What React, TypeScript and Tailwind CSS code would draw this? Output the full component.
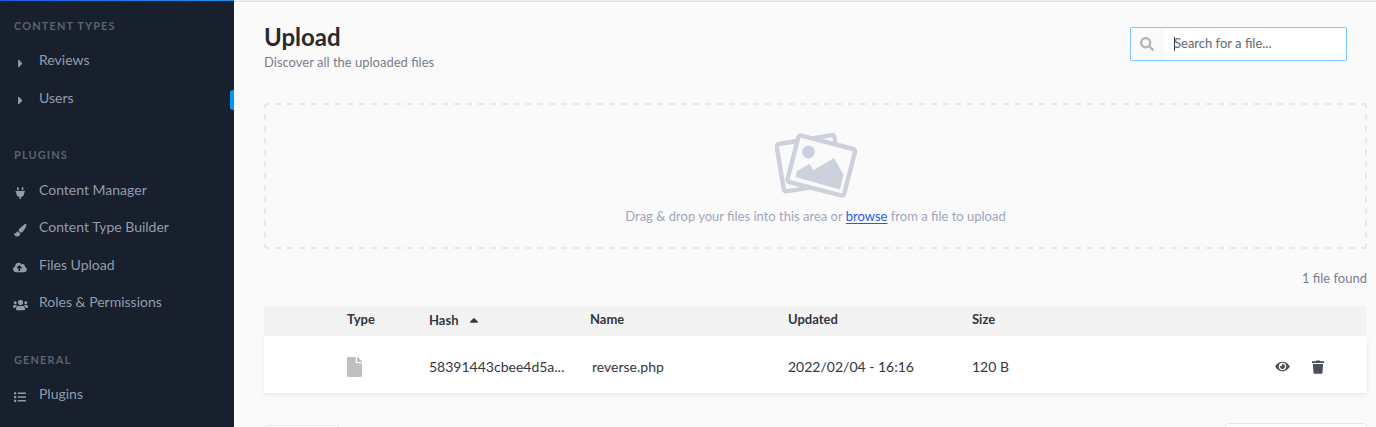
import type { ReactNode } from 'react';
import {
  FaCaretRight, FaCaretUp, FaCloudUploadAlt, FaEye, FaFile, FaList,
  FaPaintBrush, FaPlug, FaSearch, FaUsers,
} from 'react-icons/fa';

function SectionTitle({ children }: { children: ReactNode }) {
  return (
    <h3 className="pl-[14px] text-[11px] leading-[16px] font-bold tracking-[1.1px] text-[#5b626f] uppercase">
      {children}
    </h3>
  );
}

function NavLink({ icon, label }: { icon: ReactNode; label: string }) {
  return (
    <li className="flex h-[37.5px] items-center pl-[13px]">
      <span className="flex w-[26px] pt-[5px]">{icon}</span>
      <span className="text-[14px] leading-[20px]">{label}</span>
    </li>
  );
}

function Sidebar() {
  return (
    <aside className="relative h-full w-[234px] shrink-0 bg-[#18202e] text-[#919bae]">
      <div className="mb-[17px] h-px bg-linear-to-r from-[#1c5de7] to-[#1c91e7]" />
      <SectionTitle>Content types</SectionTitle>
      <ul className="mt-[7.5px]">
        <NavLink icon={<FaCaretRight className="mt-[2px] ml-px size-[13px]" />} label="Reviews" />
        <NavLink icon={<FaCaretRight className="mt-px ml-px size-[13px]" />} label="Users" />
      </ul>
      <div className="mt-[30.5px]">
        <SectionTitle>Plugins</SectionTitle>
      </div>
      <ul className="mt-[8px]">
        <NavLink icon={<FaPlug className="mt-px ml-[1px] size-[12.5px]" />} label="Content Manager" />
        <NavLink icon={<FaPaintBrush className="mt-px ml-[1px] size-[12.5px]" />} label="Content Type Builder" />
        <NavLink icon={<FaCloudUploadAlt className="h-[11px] w-[14px]" />} label="Files Upload" />
        <NavLink icon={<FaUsers className="mt-px h-[12px] w-[15px]" />} label="Roles & Permissions" />
      </ul>
      <div className="mt-[31px]">
        <SectionTitle>General</SectionTitle>
      </div>
      <ul className="mt-[7px]">
        <NavLink icon={<FaList className="mt-px ml-[1px] size-[12px]" />} label="Plugins" />
      </ul>
      <span className="absolute top-[90px] right-0 h-[20px] w-[4px] rounded-l-[3px] bg-[#0097f7]" />
    </aside>
  );
}

function PicturesIcon() {
  return (
    <svg className="ml-[2px] h-[66px] w-[84px]" viewBox="0 0 84 66" fill="none">
      <rect x="4.9" y="6.4" width="58.5" height="48" rx="2.5" transform="rotate(-9.5 33.4 30.4)" stroke="#cdd1dd" strokeWidth="4.4" />
      <rect x="17" y="8.6" width="58.500" height="48" rx="2.5" transform="rotate(14.5 46.500 32.6)" fill="#fafafb" stroke="#cdd1dd" strokeWidth="4.4" />
      <circle cx="33.5" cy="19" r="6.4" fill="#cdd1dd" />
      <path d="M20.500 44 22 38 34.500 31 38.500 37.3 59 25 68.500 41.500 65 56.500Z" fill="#cdd1dd" />
    </svg>
  );
}

function TrashIcon() {
  return (
    <svg className="ml-[22px] h-[14px] w-[12px]" viewBox="0 0 12 14" fill="currentColor">
      <path d="M0 1.300h3.500L4.300.4h3.400l.8.900H12V3H0ZM.9 3.900h10.200l-.6 9.100q-.1.800-.9.800H2.400q-.8 0-.9-.8Z" />
    </svg>
  );
}

function FileTable() {
  const cols = 'grid grid-cols-[83px_82px_161px_198px_184px_303px_1fr]';
  return (
    <div className="mt-[18px] h-[87px] text-[#333740]">
      <div className={`${cols} h-[30px] bg-[#f3f3f3] text-[13px] leading-[27px] font-bold`}>
        <span />
        <span>Type</span>
        <span className="flex h-[28px] items-center">Hash<FaCaretUp className="ml-[8px] size-[14px]" /></span>
        <span>Name</span>
        <span>Updated</span>
        <span>Size</span>
      </div>
      <div className={`${cols} h-[57px] items-center bg-white pt-[4px] text-[14px] shadow-[0_2px_4px_#e3e9f3]`}>
        <span />
        <FaFile className="h-[20px] w-[15px] text-[#bdbfc2]" />
        <span>58391443cbee4d5a...</span>
        <span className="pl-[2px]">reverse.php</span>
        <span>2022/02/04 - 16:16</span>
        <span>120 B</span>
        <span className="flex items-center text-[#4b515a]">
          <FaEye className="h-[13px] w-[15px]" />
          <TrashIcon />
        </span>
      </div>
    </div>
  );
}

export default function App() {
  return (
    <div className="flex h-[427px] overflow-hidden bg-[#fafafb] font-['Lato',sans-serif]">
      <Sidebar />
      <main className="flex-1 border-t border-[#eeeeef] pr-[9px] pl-[30px] shadow-[inset_0_1px_0_#e1e3e3]">
        <header className="flex h-[102px] justify-between">
          <div className="pt-[20px]">
            <h1 className="text-[24px] leading-[32px] font-bold text-[#292b2c]">Upload</h1>
            <p className="text-[13px] leading-[18px] text-[#787e8f]">Discover all the uploaded files</p>
          </div>
          <div className="mt-[26px] mr-[20px] flex h-[34px] w-[217px] overflow-hidden rounded-[2px] border border-[#78caff] bg-white">
            <span className="flex w-[33px] items-center bg-[#fafafb] pl-[8.5px]">
              <FaSearch className="size-[14px] text-[#b3b5b9]" />
            </span>
            <span className="flex items-center pl-[10px]">
              <span className="h-[14px] w-px bg-[#333740]" />
              <span className="-ml-px text-[13px] text-[#63686f]">Search for a file...</span>
            </span>
          </div>
        </header>
        <section className="flex h-[146px] flex-col items-center rounded-[3px] bg-[image:linear-gradient(90deg,#e3e9f3_6px,transparent_6px),linear-gradient(90deg,#e3e9f3_6px,transparent_6px),linear-gradient(180deg,#e3e9f3_6px,transparent_6px),linear-gradient(180deg,#e3e9f3_6px,transparent_6px)] [background-position:11px_0,11px_100%,0_11px,100%_11px] [background-repeat:repeat-x,repeat-x,repeat-y,repeat-y] [background-size:11.947px_2px,11.947px_2px,2px_11.8px,2px_11.8px] pt-[30px]">
          <PicturesIcon />
          <p className="mt-[7px] text-[13px] leading-[20px] text-[#9ea7b8]">
            Drag &amp; drop your files into this area or <span className="text-[#1c5de7] underline decoration-1 underline-offset-[2px] [text-decoration-skip-ink:none]">browse</span> from a file to upload
          </p>
        </section>
        <p className="mt-[19px] text-right text-[13px] leading-[20px] text-[#787e8f]">1 file found</p>
        <FileTable />
        <footer className="mt-[32px] flex justify-between">
          <div className="h-[32px] w-[75px] rounded-[3px] border border-[#e3e9f3] bg-white" />
          <div className="-mt-[2px] h-[34px] w-[142px] rounded-[3px] border border-[#e3e9f3] bg-white" />
        </footer>
      </main>
    </div>
  );
}
